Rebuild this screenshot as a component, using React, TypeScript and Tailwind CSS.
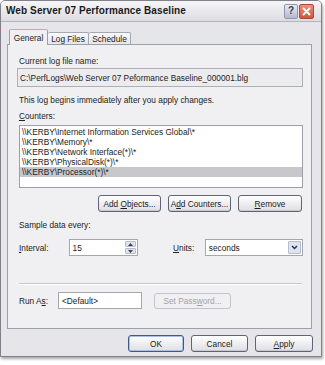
import React from 'react';

const font = { fontFamily: '"Liberation Sans", Arial, sans-serif' };

function Btn({ children, w, def, disabled }: { children: React.ReactNode; w: string; def?: boolean; disabled?: boolean }) {
  if (disabled) {
    return (
      <div className={`${w} h-[16px] flex items-center justify-center rounded-[3px] border border-[#c4c4c8] bg-[#f0f0f2] text-[#a4a4a8]`}>
        <span>{children}</span>
      </div>
    );
  }
  return (
    <div
      className={`${w} h-[17px] flex items-center justify-center rounded-[3px] border bg-gradient-to-b from-[#ffffff] to-[#dedee4] text-[#1c1c1c] ${
        def ? 'border-[#3c5a8c] shadow-[inset_0_0_0_1px_#a8c0e4]' : 'border-[#5e6474] shadow-[inset_0_-1px_0_#c8c8d0]'
      }`}
    >
      <span>{children}</span>
    </div>
  );
}

export default function App() {
  const counters = [
    '\\\\KERBY\\Internet Information Services Global\\*',
    '\\\\KERBY\\Memory\\*',
    '\\\\KERBY\\Network Interface(*)\\*',
    '\\\\KERBY\\PhysicalDisk(*)\\*',
    '\\\\KERBY\\Processor(*)\\*',
  ];

  return (
    <div className="w-[325px] h-[365px] bg-white text-[8.3px] leading-[10px] text-[#222]" style={font}>
      <div className="w-[322px] h-[357px] flex flex-col border border-[#80808a] rounded-t-[5px] bg-[#e6e6ea] shadow-[1px_2px_3px_rgba(0,0,0,0.35)]">
        {/* title bar */}
        <div className="h-[21px] flex items-center justify-between pl-[5px] pr-[7px] rounded-t-[4px] bg-gradient-to-b from-[#f6f6f8] to-[#dcdce2] border-b border-[#b4b4bc]">
          <span className="text-[10px] font-bold text-[#1a1a1a] tracking-[0.1px]">Web Server 07 Performance Baseline</span>
          <div className="flex gap-[1px]">
            <div className="w-[14px] h-[15px] flex items-center justify-center rounded-[2px] border border-[#9096b0] bg-gradient-to-b from-[#e8eaf4] to-[#b4b8cc] text-[10px] font-bold text-[#3a3f56]">?</div>
            <div className="w-[15px] h-[15px] flex items-center justify-center rounded-[2px] border border-[#a84a3c] bg-gradient-to-b from-[#f08e7e] to-[#d0543e]">
              <svg width="9" height="9" viewBox="0 0 9 9">
                <path d="M1.5 1.5 L7.5 7.5 M7.5 1.5 L1.5 7.5" stroke="#fff" strokeWidth="1.8" strokeLinecap="round" />
              </svg>
            </div>
          </div>
        </div>

        {/* body */}
        <div className="flex flex-col pl-[6px] pr-[9px]">
          {/* tabs */}
          <div className="mt-[6px] h-[16px] flex items-end pl-[2px] relative z-10">
            <div className="w-[39px] h-[16px] -mb-px flex items-center justify-center border border-b-0 border-[#9ca0aa] border-t-[#e8a84c] rounded-t-[2px] bg-[#f0f0f2]">
              General
            </div>
            <div className="w-[41px] h-[12px] flex items-center justify-center border border-b-0 border-l-0 border-[#a4a8b0] rounded-t-[2px] bg-gradient-to-b from-[#fafafc] to-[#e4e4ea]">
              Log Files
            </div>
            <div className="w-[42px] h-[12px] flex items-center justify-center border border-b-0 border-l-0 border-[#a4a8b0] rounded-t-[2px] bg-gradient-to-b from-[#fafafc] to-[#e4e4ea]">
              Schedule
            </div>
          </div>

          {/* panel */}
          <div className="h-[285px] flex flex-col border border-[#9ca0aa] bg-[#f0f0f2] pl-[9px] pr-[8px]">
            <div className="mt-[11px] ml-[2px]">Current log file name:</div>
            <div className="mt-[2px] h-[19px] flex items-center pl-[2px] border border-[#aeb0b8] bg-[#ececef]">
              C:\PerfLogs\Web Server 07 Peformance Baseline_000001.blg
            </div>
            <div className="mt-[8px] ml-[2px]">This log begins immediately after you apply changes.</div>
            <div className="mt-[6px] ml-[2px]">
              <span className="underline">C</span>ounters:
            </div>
            <div className="mt-[4px] ml-[2px] h-[63px] flex flex-col border border-[#9c9ea8] bg-white pt-px">
              {counters.map((c, i) => (
                <div key={c} className={`h-[10px] pl-[2px] ${i === 4 ? 'bg-[#c8c8cc]' : ''}`}>
                  {c}
                </div>
              ))}
            </div>
            <div className="mt-[7px] flex justify-end gap-[7px] pr-px">
              <Btn w="w-[63px]">
                Add <span className="underline">O</span>bjects...
              </Btn>
              <Btn w="w-[63px]">
                A<span className="underline">d</span>d Counters...
              </Btn>
              <Btn w="w-[64px]">
                <span className="underline">R</span>emove
              </Btn>
            </div>
            <div className="mt-[8px] ml-[2px]">Sample data every:</div>
            <div className="mt-[9px] flex items-center">
              <span className="w-[50px] ml-[2px]">
                <span className="underline">I</span>nterval:
              </span>
              <div className="w-[70px] h-[17px] flex items-center justify-between border border-[#a4a6b0] bg-white pl-[3px] pr-px">
                <span>15</span>
                <div className="flex flex-col gap-px">
                  <div className="w-[11px] h-[6px] flex items-center justify-center rounded-[1px] border border-[#b4bccc] bg-[#dfe4f0]">
                    <svg width="5" height="3" viewBox="0 0 5 3"><path d="M0 3 L2.5 0 L5 3 Z" fill="#3c4250" /></svg>
                  </div>
                  <div className="w-[11px] h-[6px] flex items-center justify-center rounded-[1px] border border-[#b4bccc] bg-[#dfe4f0]">
                    <svg width="5" height="3" viewBox="0 0 5 3"><path d="M0 0 L2.5 3 L5 0 Z" fill="#3c4250" /></svg>
                  </div>
                </div>
              </div>
              <span className="ml-[35px] w-[32px]">
                <span className="underline">U</span>nits:
              </span>
              <div className="w-[99px] h-[17px] flex items-center justify-between border border-[#a4a6b0] bg-white pl-[3px] pr-px">
                <span>seconds</span>
                <div className="w-[13px] h-[13px] flex items-center justify-center rounded-[1px] border border-[#b4bccc] bg-[#dfe4f0]">
                  <svg width="7" height="5" viewBox="0 0 7 5"><path d="M1 1 L3.5 3.5 L6 1" stroke="#2c3240" strokeWidth="1.5" fill="none" /></svg>
                </div>
              </div>
            </div>
            <div className="mt-[27px] ml-[2px] mr-px h-[2px] border-t border-[#c8c8cc] border-b border-b-white" />
            <div className="mt-[7px] flex items-center">
              <span className="w-[39px] ml-[2px]">
                Run A<span className="underline">s</span>:
              </span>
              <div className="w-[84px] h-[17px] flex items-center border border-[#a4a6b0] bg-white pl-[3px]">&lt;Default&gt;</div>
              <div className="ml-[12px]">
                <Btn w="w-[77px]" disabled>
                  Set Pass<span className="underline">w</span>ord...
                </Btn>
              </div>
            </div>
          </div>

          {/* dialog buttons */}
          <div className="mt-[6px] flex justify-end gap-[7px] -mr-[1px]">
            <Btn w="w-[56px]" def>
              OK
            </Btn>
            <Btn w="w-[57px]">Cancel</Btn>
            <Btn w="w-[58px]">
              <span className="underline">A</span>pply
            </Btn>
          </div>
        </div>
      </div>
    </div>
  );
}
